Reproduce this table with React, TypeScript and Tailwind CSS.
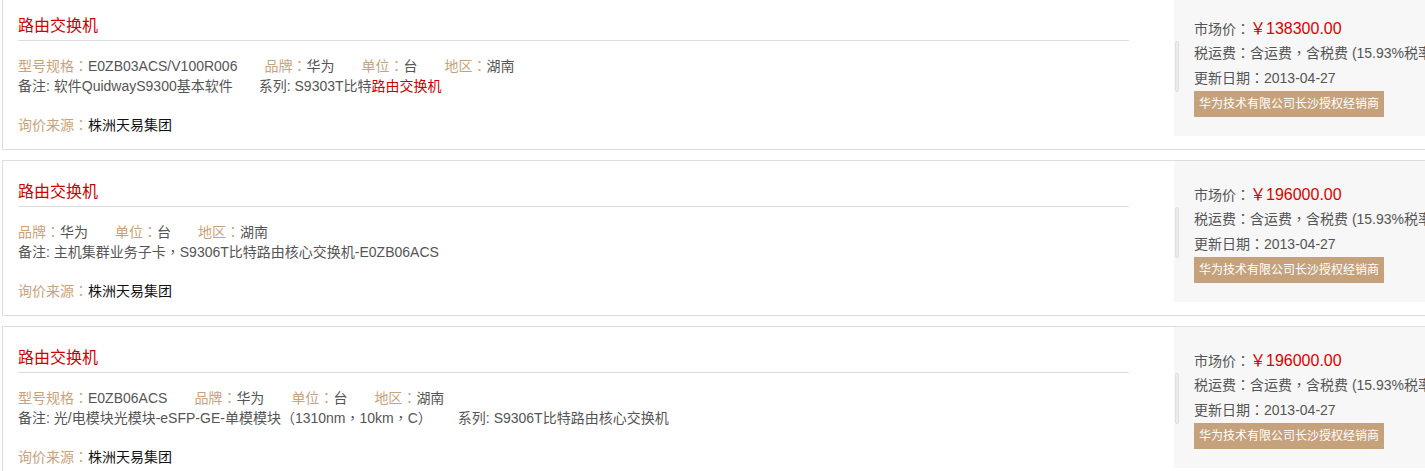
import React from "react";

type Item = { label: string; value: string };

type Product = {
  specs: Item[];
  remark: string;
  series?: string;
  seriesRed?: string;
  price: string;
};

const products: Product[] = [
  {
    specs: [
      { label: "型号规格：", value: "E0ZB03ACS/V100R006" },
      { label: "品牌：", value: "华为" },
      { label: "单位：", value: "台" },
      { label: "地区：", value: "湖南" },
    ],
    remark: "软件QuidwayS9300基本软件",
    series: "S9303T比特",
    seriesRed: "路由交换机",
    price: "￥138300.00",
  },
  {
    specs: [
      { label: "品牌：", value: "华为" },
      { label: "单位：", value: "台" },
      { label: "地区：", value: "湖南" },
    ],
    remark: "主机集群业务子卡，S9306T比特路由核心交换机-E0ZB06ACS",
    price: "￥196000.00",
  },
  {
    specs: [
      { label: "型号规格：", value: "E0ZB06ACS" },
      { label: "品牌：", value: "华为" },
      { label: "单位：", value: "台" },
      { label: "地区：", value: "湖南" },
    ],
    remark: "光/电模块光模块-eSFP-GE-单模模块（1310nm，10km，C）",
    series: "S9306T比特路由核心交换机",
    price: "￥196000.00",
  },
];

const font = { fontFamily: '"Liberation Sans","Noto Sans CJK SC",sans-serif' };
const punctFont = { fontFamily: '"Noto Sans CJK TC",sans-serif' };

// full-width punctuation sits centred in the reference, TC glyphs do that
function T({ children }: { children: string }) {
  const parts = children.split(/([：，（）])/);
  return (
    <>
      {parts.map((s, i) =>
        /^[：，（）]$/.test(s) ? (
          <span key={i} className="leading-[0]" style={punctFont}>
            {s}
          </span>
        ) : (
          s
        )
      )}
    </>
  );
}

function ProductCard({ p }: { p: Product }) {
  return (
    <div className="flex h-[156px] w-[1480px] flex-none border border-[#dddddd] bg-white mb-[10px]">
      {/* left info */}
      <div className="ml-[15px] w-[1111px] flex-none pt-[19px]">
        <div className="border-b border-[#dddddd] pb-[2px] text-[16px] leading-[24px] text-[#cc0000]">
          路由交换机
        </div>
        <div className="mt-[15px] text-[14px] leading-[20px] text-[#555555]">
          <div className="h-[20px] whitespace-nowrap">
            {p.specs.map((s) => (
              <span key={s.label} className="mr-[27px]">
                <span className="text-[#c9a27c]">
                  <T>{s.label}</T>
                </span>
                {s.value}
              </span>
            ))}
          </div>
          <div className="h-[20px] whitespace-nowrap">
            <span className="mr-[26px]">
              备注: <T>{p.remark}</T>
            </span>
            {p.series && (
              <span>
                系列: {p.series}
                {p.seriesRed && <span className="text-[#cc0000]">{p.seriesRed}</span>}
              </span>
            )}
          </div>
          <div className="mt-[19px] h-[20px]">
            <span className="text-[#c9a27c]">
              <T>询价来源：</T>
            </span>
            <span className="text-[#111111]">株洲天易集团</span>
          </div>
        </div>
      </div>

      {/* right price panel */}
      <div className="ml-[45px] flex h-[141px] flex-1 items-start bg-[#f7f7f7]">
        <div className="ml-[1px] mt-[46px] h-[51px] w-[4px] flex-none rounded-full border border-[#e0e0e0] bg-[#ececec]" />
        <div className="ml-[15px] pt-[21px] text-[14px] leading-[25px] text-[#555555] whitespace-nowrap">
          <div className="h-[25px]">
            <T>市场价：</T>
            <span className="text-[16px] text-[#dd0000]">{p.price}</span>
          </div>
          <div className="h-[25px]">
            <T>税运费：含运费，含税费 (15.93%税率)</T>
          </div>
          <div className="h-[25px]">
            <T>更新日期：2013-04-27</T>
          </div>
          <div className="inline-block h-[26px] bg-[#c6a27c] px-[5px] text-[12px] leading-[26px] text-white">
            华为技术有限公司长沙授权经销商
          </div>
        </div>
      </div>
    </div>
  );
}

export default function App() {
  return (
    <div className="h-[471px] w-[1425px] overflow-hidden bg-white" style={font}>
      <div className="-mt-[6px] pl-[2px]">
        {products.map((p, i) => (
          <ProductCard key={i} p={p} />
        ))}
      </div>
    </div>
  );
}
